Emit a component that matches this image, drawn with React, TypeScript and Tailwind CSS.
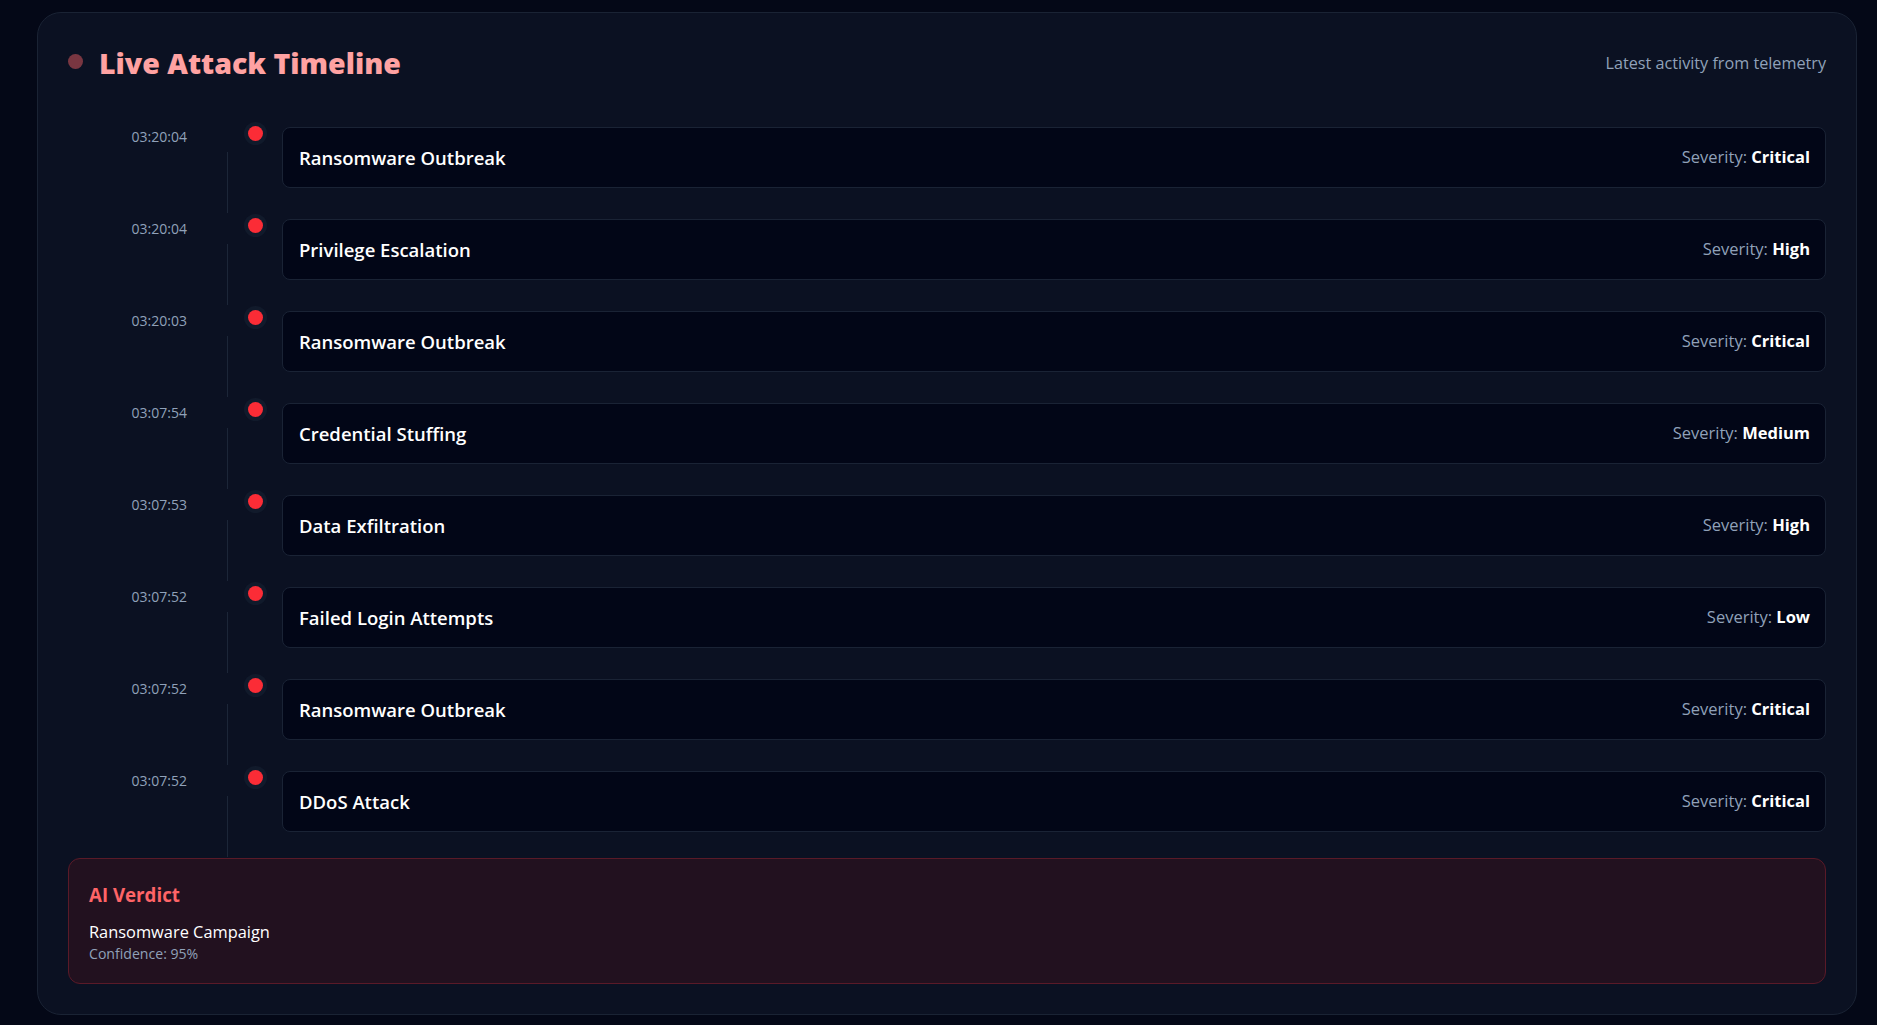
import React from "react";

const events = [
  { time: "03:20:04", title: "Ransomware Outbreak", severity: "Critical" },
  { time: "03:20:04", title: "Privilege Escalation", severity: "High" },
  { time: "03:20:03", title: "Ransomware Outbreak", severity: "Critical" },
  { time: "03:07:54", title: "Credential Stuffing", severity: "Medium" },
  { time: "03:07:53", title: "Data Exfiltration", severity: "High" },
  { time: "03:07:52", title: "Failed Login Attempts", severity: "Low" },
  { time: "03:07:52", title: "Ransomware Outbreak", severity: "Critical" },
  { time: "03:07:52", title: "DDoS Attack", severity: "Critical" },
];

export default function App() {
  return (
    <div
      className="min-h-screen bg-[#040817] pl-[37px] pr-[20px] pt-[12px] pb-[10px]"
      style={{ fontFamily: '"Open Sans", "Noto Sans", sans-serif' }}
    >
      <section className="rounded-3xl border border-[#1a2334] bg-[#0b1122] px-[30px] pt-[32px] pb-[30px]">
        {/* header */}
        <div className="flex items-center justify-between h-9">
          <div className="flex items-center">
            <span className="w-[15px] h-[15px] rounded-full bg-red-400/45 -mt-[3px]"></span>
            <h2 className="ml-4 text-[28.5px] leading-9 font-extrabold text-red-300">
              Live Attack Timeline
            </h2>
          </div>
          <p className="text-[16.2px] text-slate-400">Latest activity from telemetry</p>
        </div>

        {/* timeline */}
        <div className="mt-[46px] flex flex-col gap-[6px]">
          {events.map((e, i) => (
            <div key={i} className="flex h-[86px]">
              <div className="w-[119px] text-right text-sm leading-5 text-slate-400">{e.time}</div>
              <div className="w-[95px] flex flex-col">
                <div className="h-[25px] pl-[61px]">
                  <div className="w-[15px] h-[15px] -mt-[1px] rounded-full bg-red-500 ring-[4px] ring-[#111a2b]"></div>
                </div>
                <div className="flex-1 ml-[40px] w-px bg-[#1c2638]"></div>
              </div>
              <div className="flex-1 h-[61px] rounded-lg border border-[#1a2335] bg-[#020617] pl-4 pr-[15px] flex items-center justify-between">
                <span className="text-[18.5px] font-semibold text-white">{e.title}</span>
                <span className="text-[16.5px] text-slate-400">
                  Severity: <b className="font-bold text-white">{e.severity}</b>
                </span>
              </div>
            </div>
          ))}
        </div>

        {/* verdict */}
        <div className="mt-px rounded-xl border border-[#5a1a28] bg-[#22111f] px-5 pt-[22px] pb-[19px]">
          <h3 className="text-[18.7px] leading-7 font-bold text-red-400">AI Verdict</h3>
          <p className="mt-[11px] text-[16.4px] leading-6 text-white">Ransomware Campaign</p>
          <p className="text-[14.1px] leading-5 text-slate-400">Confidence: 95%</p>
        </div>
      </section>
    </div>
  );
}
